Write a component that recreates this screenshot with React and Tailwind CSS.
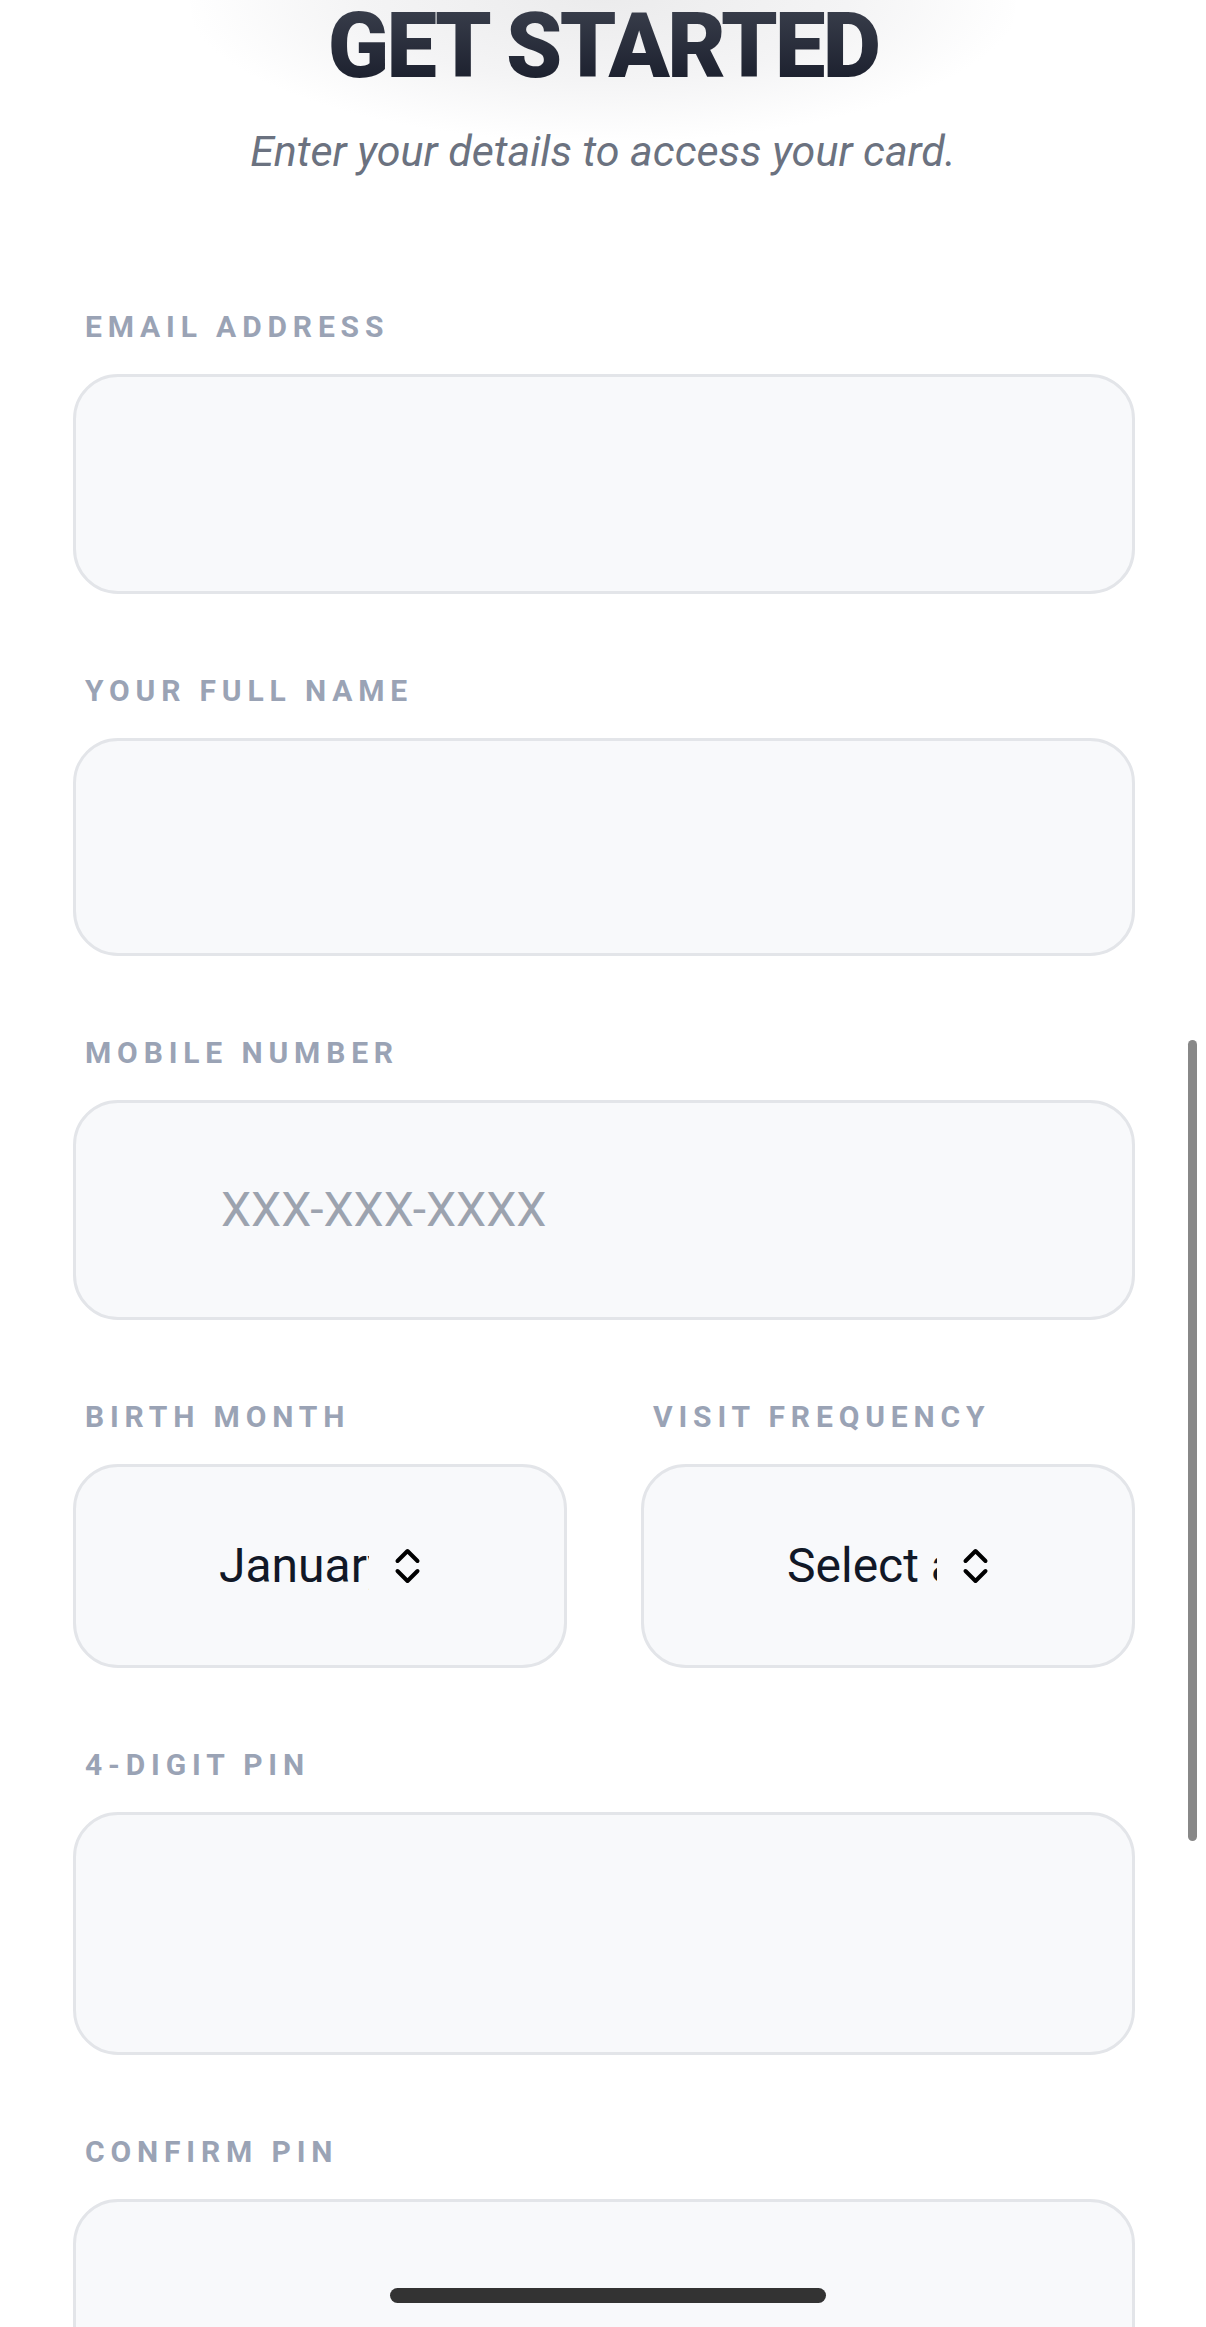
import React from "react";

function Chevrons() {
  return (
    <svg width="27" height="36" viewBox="0 0 27 36" fill="none" stroke="#000" strokeWidth="4" strokeLinecap="round" strokeLinejoin="round">
      <polyline points="3.5,13 13.5,3 23.5,13" />
      <polyline points="3.5,23 13.5,33 23.5,23" />
    </svg>
  );
}

function Label({ children }) {
  return (
    <div className="pl-[12px] text-[30px] leading-none font-bold tracking-[0.195em] text-[#9aa3b5] whitespace-nowrap">
      {children}
    </div>
  );
}

function Box({ h, children, className = "" }) {
  return (
    <div
      className={`mt-[32px] rounded-[45px] border-[3px] border-[#e3e5e9] bg-[#f8f9fb] ${className}`}
      style={{ height: h }}
    >
      {children}
    </div>
  );
}

function SelectBox({ text }) {
  return (
    <Box h={204} className="flex items-center justify-center">
      <div className="flex items-center gap-[25px]">
        <span className="block w-[150px] overflow-hidden whitespace-nowrap text-[48px] leading-none text-[#111827]">
          {text}
        </span>
        <Chevrons />
      </div>
    </Box>
  );
}

export default function App() {
  return (
    <div
      className="relative h-[2327px] w-[1206px] overflow-hidden bg-white"
      style={{ fontFamily: "Roboto, 'Noto Sans', sans-serif" }}
    >
      <div className="pointer-events-none absolute left-[190px] top-[-150px] h-[290px] w-[826px] rounded-full bg-[radial-gradient(ellipse_at_center,#ebebec_0%,#f4f4f5_42%,rgba(255,255,255,0)_72%)]" />

      <div className="relative flex flex-col items-center">
        <h1 className="bg-gradient-to-b from-[#3c414e] to-[#181c2a] bg-clip-text pt-[2px] text-[90px] font-black leading-none tracking-[-0.03em] text-transparent">
          GET STARTED
        </h1>
        <p className="mt-[27px] text-[43px] italic leading-[1.5] text-[#6b7280]">
          Enter your details to access your card.
        </p>
      </div>

      <div className="relative mt-[128px] flex flex-col gap-[82px] pl-[73px] pr-[71px]">
        <div>
          <Label>EMAIL ADDRESS</Label>
          <Box h={220} />
        </div>
        <div>
          <Label>YOUR FULL NAME</Label>
          <Box h={218} />
        </div>
        <div>
          <Label>MOBILE NUMBER</Label>
          <Box h={220} className="flex items-center pl-[145px]">
            <span className="text-[48px] leading-none text-[#9ca3af]">XXX-XXX-XXXX</span>
          </Box>
        </div>
        <div className="grid grid-cols-2 gap-x-[74px]">
          <div>
            <Label>BIRTH MONTH</Label>
            <SelectBox text="January" />
          </div>
          <div>
            <Label>VISIT FREQUENCY</Label>
            <SelectBox text="Select an option" />
          </div>
        </div>
        <div>
          <Label>4-DIGIT PIN</Label>
          <Box h={243} />
        </div>
        <div>
          <Label>CONFIRM PIN</Label>
          <Box h={243} />
        </div>
      </div>

      <div className="pointer-events-none absolute left-[1188px] top-[1040px] h-[801px] w-[9px] rounded-full bg-[#888888]" />
      <div className="pointer-events-none absolute left-[390px] top-[2288px] h-[15px] w-[436px] rounded-full bg-[#333333]" />
    </div>
  );
}
